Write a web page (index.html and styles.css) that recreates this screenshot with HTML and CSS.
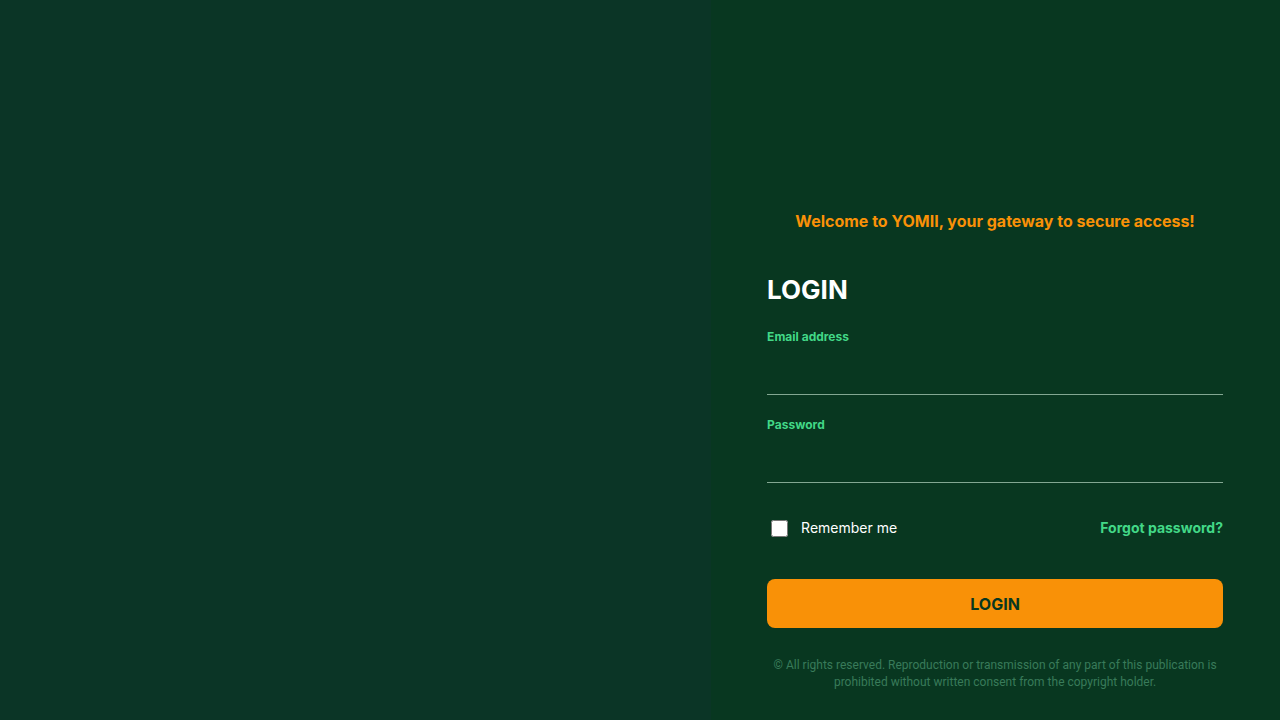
FILE: index.html
```html
<!DOCTYPE html>
<html lang="en">
<head>
<meta charset="utf-8">
<meta name="viewport" content="width=device-width, initial-scale=1">
<title>YOMII Login</title>
<link rel="stylesheet" href="styles.css">
</head>
<body>
<div class="layout">
  <div class="cover"></div>
  <main class="panel">
    <p class="welcome">Welcome to YOMII, your gateway to secure access!</p>
    <form class="form">
      <h1 class="title">LOGIN</h1>
      <div class="field">
        <label class="label" for="email">Email address</label>
        <input class="input" id="email" type="email">
      </div>
      <div class="field">
        <label class="label" for="password">Password</label>
        <input class="input" id="password" type="password">
      </div>
      <div class="options">
        <label class="remember" for="remember"><input class="check" id="remember" type="checkbox">Remember me</label>
        <a class="forgot" href="#">Forgot password?</a>
      </div>
      <button class="submit" type="submit">LOGIN</button>
    </form>
    <p class="legal">© All rights reserved. Reproduction or transmission of any part of this publication is prohibited without written consent from the copyright holder.</p>
  </main>
</div>
</body>
</html>
```
FILE: styles.css
```css
* { box-sizing: border-box; }
body {
  margin: 0;
  background: #083720;
  color: #fff;
  font: 14px/20px Inter, sans-serif;
}
.layout {
  display: grid;
  grid-template-columns: minmax(0, 5fr) minmax(0, 4fr);
  min-height: 100vh;
}
.cover { background: #0b3526; }
.panel {
  display: flex;
  flex-direction: column;
  justify-content: flex-end;
  padding: 29px 57px 29px 56px;
}
.welcome {
  margin: 0 0 41px;
  color: #f99107;
  font-size: 16px;
  line-height: 24px;
  font-weight: 700;
  text-align: center;
}
.form { display: flex; flex-direction: column; }
.title { margin: 0 0 21px; font-size: 26px; line-height: 32px; font-weight: 700; }
.field { display: flex; flex-direction: column; margin-bottom: 20px; }
.label { color: #42d887; font-size: 12px; line-height: 20px; font-weight: 700; }
.input {
  width: 100%;
  height: 48px;
  padding: 0;
  border: 0;
  border-bottom: 1px solid #83a792;
  background: transparent;
  color: #fff;
  font: inherit;
  outline: 0;
}
.options {
  display: flex;
  align-items: center;
  justify-content: space-between;
  margin: 15px 0 41px;
}
.remember { display: flex; align-items: center; }
.check { width: 17px; height: 17px; margin: 0 13px 0 4px; }
.forgot { color: #42d887; font-weight: 700; text-decoration: none; }
.submit {
  height: 49px;
  border: 0;
  border-radius: 8px;
  background: #f99107;
  color: #083720;
  font: 700 16px/24px Inter, sans-serif;
}
.legal {
  margin: 29px 0 0;
  color: #387b5a;
  font-family: Roboto, sans-serif;
  font-size: 12px;
  line-height: 17px;
  text-align: center;
}
```
